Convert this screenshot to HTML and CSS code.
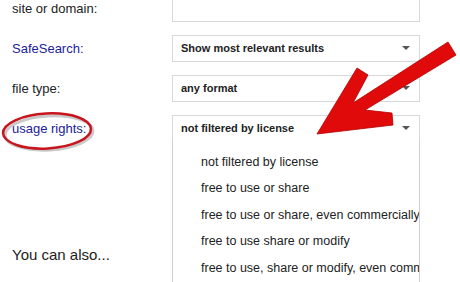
FILE: index.html
```html
<!DOCTYPE html>
<html lang="en">
<head>
    <meta charset="UTF-8">
    <meta name="viewport" content="width=device-width, initial-scale=1.0">
    <title>Advanced Search - usage rights</title>
    <link rel="stylesheet" href="styles.css">
</head>
<body>
    <div class="form">
        <div class="row">
            <label class="lbl">site or domain:</label>
            <div class="field"></div>
        </div>
        <div class="row">
            <label class="lbl link">SafeSearch:</label>
            <div class="field">Show most relevant results<span class="caret"></span></div>
        </div>
        <div class="row">
            <label class="lbl">file type:</label>
            <div class="field">any format<span class="caret"></span></div>
        </div>
        <div class="row">
            <label class="lbl link">usage rights:</label>
            <div class="field open">not filtered by license<span class="caret"></span>
                <ul class="menu">
                    <li>not filtered by license</li>
                    <li>free to use or share</li>
                    <li>free to use or share, even commercially</li>
                    <li>free to use share or modify</li>
                    <li>free to use, share or modify, even commercially</li>
                </ul>
            </div>
        </div>
    </div>
    <p class="also">You can also...</p>

    <!-- hand-drawn annotation on top of the screenshot -->
    <svg class="markup" viewBox="0 0 460 282" xmlns="http://www.w3.org/2000/svg">
        <ellipse cx="49" cy="133" rx="44" ry="17" transform="rotate(-3 49 133)" fill="none" stroke="#c9c9c9" stroke-width="3"/>
        <ellipse cx="47" cy="131" rx="44" ry="17.5" transform="rotate(-3 47 131)" fill="none" stroke="#c8141c" stroke-width="2.5"/>
        <polygon points="317,134 357,68 368,75 353,103 448,42 456,55 365,110 392,113 393,125" fill="#e00a0a" stroke="#b00000" stroke-width="0.8" stroke-linejoin="round"/>
    </svg>
</body>
</html>
```
FILE: styles.css
```css
body {
    margin: 0;
    width: 460px;
    height: 282px;
    overflow: hidden;
    position: relative;
    background: #fff;
    color: #222;
    font-family: "Liberation Sans", Arial, sans-serif;
}
.form {
    margin-top: -12px;
    padding-left: 12px;
}
.row {
    display: grid;
    grid-template-columns: 160px 248px;
    align-items: center;
    height: 40px;
}
.lbl {
    font-size: 13px;
    color: #222;
}
.lbl.link {
    color: #22229a;
}
.field {
    position: relative;
    box-sizing: border-box;
    height: 27px;
    border: 1px solid #d9d9d9;
    display: flex;
    align-items: center;
    padding: 0 9px 0 8px;
    font-size: 11px;
    font-weight: bold;
    color: #222;
}
.caret {
    margin-left: auto;
    width: 0;
    height: 0;
    border-left: 4px solid transparent;
    border-right: 4px solid transparent;
    border-top: 4px solid #555;
}
.menu {
    position: absolute;
    top: 100%;
    left: -1px;
    width: 248px;
    height: 150px;
    box-sizing: border-box;
    margin: 0;
    padding: 8px 0 0 0;
    list-style: none;
    background: #fff;
    border: 1px solid #cfcfcf;
    border-top: none;
    overflow: hidden;
    font-size: 12.5px;
    font-weight: normal;
    color: #222;
}
.menu li {
    padding-left: 28px;
    line-height: 26.5px;
    white-space: nowrap;
}
.also {
    margin: 98px 0 0 12px;
    font-size: 15px;
    line-height: 18px;
    color: #222;
}
.markup {
    position: absolute;
    left: 0;
    top: 0;
    width: 460px;
    height: 282px;
    pointer-events: none;
}
```
